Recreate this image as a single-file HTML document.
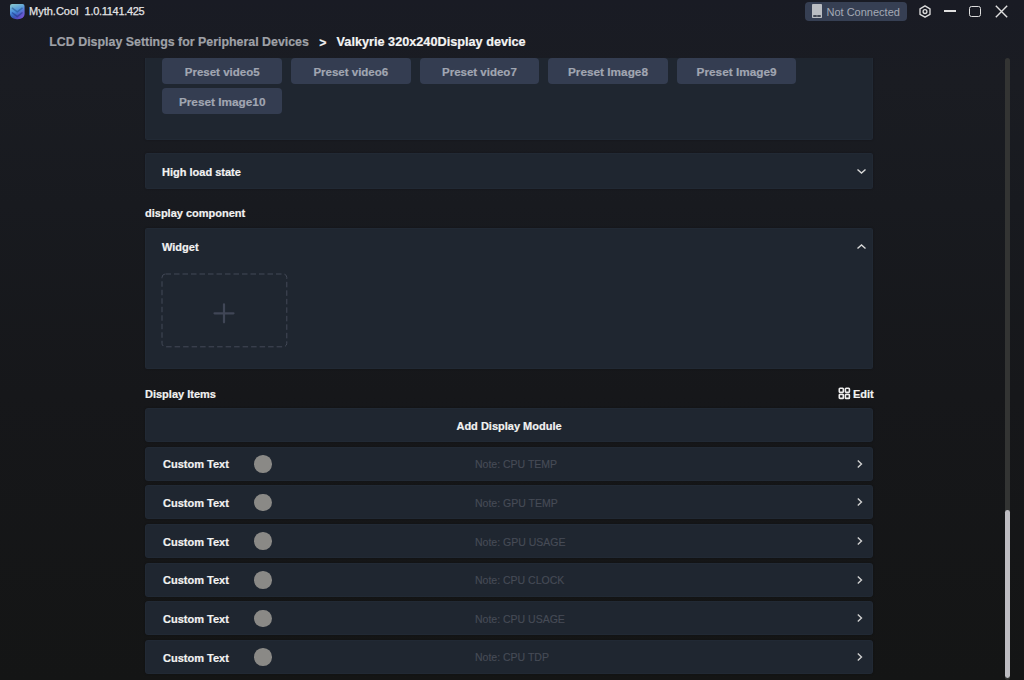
<!DOCTYPE html>
<html><head><meta charset="utf-8">
<style>
*{margin:0;padding:0;box-sizing:border-box}
html,body{width:1024px;height:680px;overflow:hidden}
body{position:relative;font-family:"Liberation Sans",sans-serif;background:linear-gradient(180deg,#191b24 0%,#1a1c22 12%,#181a1f 30%,#16171a 58%,#141515 100%);color:#fff}
.a{position:absolute;white-space:nowrap}
.t{position:absolute;white-space:nowrap;line-height:1}
.b{-webkit-text-stroke:0.25px currentColor}
.panel{position:absolute;left:145px;width:728px;background:#1f2630;border-radius:2px}
.btn{position:absolute;height:25.6px;width:119.6px;background:#343d51;border-radius:4px;color:#a1a6b2;font-weight:bold;-webkit-text-stroke:0.2px currentColor;font-size:11.5px;text-align:center;line-height:28.6px}
.row{position:absolute;left:145px;width:728px;height:34.3px;background:#1f2630;border-radius:3px}
.r{height:34px}
.panel,.row{box-shadow:inset 0 0 0 1px rgba(60,66,90,0.1),0 0 2px rgba(0,0,0,0.3)}
.row .ct{position:absolute;left:18px;top:0.6px;line-height:34.5px;font-size:11px;font-weight:bold;-webkit-text-stroke:0.2px currentColor;color:#f2f2f2}
.row .dot{position:absolute;left:109px;top:8.4px;width:17.5px;height:17.5px;border-radius:50%;background:#8a8986}
.row .note{position:absolute;left:330px;top:0.5px;-webkit-text-stroke:0.15px currentColor;line-height:34.5px;font-size:10.5px;color:#464b56}
.row svg{position:absolute;left:711px;top:12px}
</style></head>
<body>
<!-- title bar -->
<svg class="a" style="left:8.5px;top:2.5px" width="16.5" height="17" viewBox="0 0 16.5 17">
  <defs>
   <linearGradient id="lg" x1="0.2" y1="0" x2="0.5" y2="1"><stop offset="0" stop-color="#86c6cf"/><stop offset="0.5" stop-color="#4a8ddc"/><stop offset="1" stop-color="#1f3596"/></linearGradient>
   <linearGradient id="lg2" x1="0" y1="0" x2="1" y2="1"><stop offset="0.5" stop-color="#8a5ae8" stop-opacity="0"/><stop offset="0.9" stop-color="#9060e6" stop-opacity="0.95"/></linearGradient>
   <clipPath id="cp"><path d="M3 1 H13.5 Q15.5 1 15.5 3 V10.5 Q15.5 14 12 15.6 Q8.25 17 4.5 15.6 Q1 14 1 10.5 V3 Q1 1 3 1 Z"/></clipPath>
  </defs>
  <path d="M3 1 H13.5 Q15.5 1 15.5 3 V10.5 Q15.5 14 12 15.6 Q8.25 17 4.5 15.6 Q1 14 1 10.5 V3 Q1 1 3 1 Z" fill="url(#lg)"/>
  <g clip-path="url(#cp)"><rect x="0" y="0" width="17" height="17" fill="url(#lg2)"/></g>
  <path d="M3 4.8 L8.25 8.8 L13.5 4.8" stroke="#23508a" stroke-width="1.5" fill="none" opacity="0.55"/>
  <path d="M3 9.5 L8.25 13.5 L13.5 9.5" stroke="#1a2a80" stroke-width="1.5" fill="none" opacity="0.5"/>
</svg>
<div class="t" style="left:29px;top:6.3px;font-size:11px;color:#e4e4e6;-webkit-text-stroke:0.25px currentColor">Myth.Cool</div>
<div class="t" style="left:84.6px;top:6.3px;font-size:11px;letter-spacing:-0.3px;color:#e4e4e6;-webkit-text-stroke:0.25px currentColor">1.0.1141.425</div>

<div class="a" style="left:805px;top:2px;width:102px;height:18.5px;background:#363f53;border-radius:4px"></div>
<div class="a" style="left:811.7px;top:3.8px;width:10.3px;height:14.1px;background:#babdc2;border-radius:0.8px"></div>
<div class="a" style="left:813px;top:14.8px;width:3.6px;height:2.1px;background:#434955;border-radius:1px"></div>
<div class="a" style="left:817.2px;top:14.8px;width:3.6px;height:2.1px;background:#434955;border-radius:1px"></div>
<div class="t" style="left:826.5px;top:6.5px;font-size:11px;color:#a4a9b5">Not Connected</div>

<svg class="a" style="left:918px;top:4px" width="14" height="15" viewBox="918 4 14 15">
  <path d="M925 5.9 L930 8.8 L930 14.4 L925 17.2 L920 14.4 L920 8.8 Z" stroke="#dcdcdc" stroke-width="1.35" fill="none" stroke-linejoin="round"/>
  <circle cx="925" cy="11.55" r="1.9" stroke="#dcdcdc" stroke-width="1.35" fill="none"/>
</svg>
<div class="a" style="left:943.5px;top:10.3px;width:12.2px;height:1.7px;background:#e0e0e0"></div>
<div class="a" style="left:969px;top:5.6px;width:12.2px;height:11.8px;border:1.5px solid #dedede;border-radius:2.5px"></div>
<svg class="a" style="left:995px;top:5px" width="13" height="13" viewBox="0 0 13 13">
  <path d="M0.8 0.8 L12.2 12.2 M12.2 0.8 L0.8 12.2" stroke="#e0e0e0" stroke-width="1.4"/>
</svg>

<!-- breadcrumb -->
<div class="t" style="left:49.3px;top:36px;font-size:12.4px;font-weight:bold;-webkit-text-stroke:0.2px currentColor;color:#9fa1a7">LCD Display Settings for Peripheral Devices</div>
<div class="t" style="left:319.3px;top:37px;font-size:12.3px;font-weight:bold;-webkit-text-stroke:0.2px currentColor;color:#f0f0f0">&gt;</div>
<div class="t" style="left:336.6px;top:35.8px;font-size:12.7px;font-weight:bold;-webkit-text-stroke:0.2px currentColor;color:#f4f4f4">Valkyrie 320x240Display device</div>

<!-- scroll content -->
<div class="a" style="left:0;top:58px;width:1024px;height:622px;overflow:hidden">
 <div class="a" style="left:0;top:-58px;width:1024px;height:680px">
  <div class="panel" style="top:40px;height:100px"></div>
  <div class="btn" style="left:162.4px;top:58.2px">Preset video5</div>
  <div class="btn" style="left:291px;top:58.2px">Preset video6</div>
  <div class="btn" style="left:419.6px;top:58.2px">Preset video7</div>
  <div class="btn" style="left:548.2px;top:58.2px;font-size:11.8px">Preset Image8</div>
  <div class="btn" style="left:676.8px;top:58.2px;font-size:11.8px">Preset Image9</div>
  <div class="btn" style="left:162.4px;top:88.2px;font-size:11.8px">Preset Image10</div>

  <div class="panel" style="top:153.2px;height:35.6px"></div>
  <div class="t" style="left:162px;top:166.8px;font-size:11px;font-weight:bold;-webkit-text-stroke:0.2px currentColor;color:#f2f2f2">High load state</div>
  <svg class="a" style="left:856px;top:168px" width="11" height="7" viewBox="0 0 11 7"><path d="M1.5 1.5 L5.5 5 L9.5 1.5" stroke="#d8d8d8" stroke-width="1.4" fill="none"/></svg>

  <div class="t" style="left:145px;top:208px;font-size:11px;font-weight:bold;-webkit-text-stroke:0.2px currentColor;color:#f2f2f2">display component</div>

  <div class="panel" style="top:227.8px;height:141.1px"></div>
  <div class="t" style="left:162px;top:241.8px;font-size:11px;font-weight:bold;-webkit-text-stroke:0.2px currentColor;color:#f2f2f2">Widget</div>
  <svg class="a" style="left:856px;top:243px" width="11" height="7" viewBox="0 0 11 7"><path d="M1.5 5.5 L5.5 2 L9.5 5.5" stroke="#d8d8d8" stroke-width="1.4" fill="none"/></svg>
  <svg class="a" style="left:161px;top:272.5px" width="127" height="75" viewBox="0 0 127 75">
    <rect x="1" y="1" width="124.8" height="72.8" rx="3.5" stroke="#434957" stroke-width="1" fill="none" stroke-dasharray="5.5 3"/>
    <path d="M53.5 40.3 H72.5 M63 31.3 V49.3" stroke="#404656" stroke-width="2.2" stroke-linecap="round"/>
  </svg>

  <div class="t" style="left:145px;top:388.6px;font-size:11px;font-weight:bold;-webkit-text-stroke:0.2px currentColor;color:#f2f2f2">Display Items</div>
  <svg class="a" style="left:838px;top:387px" width="13" height="13" viewBox="0 0 13 13">
    <g stroke="#eeeeee" stroke-width="1.6" fill="none"><rect x="1.3" y="1.3" width="4" height="4" rx="0.7"/><rect x="7.4" y="1.3" width="4" height="4" rx="0.7"/><rect x="1.3" y="7.4" width="4" height="4" rx="0.7"/><rect x="7.4" y="7.4" width="4" height="4" rx="0.7"/></g>
  </svg>
  <div class="t" style="left:853px;top:388.6px;font-size:11px;font-weight:bold;-webkit-text-stroke:0.2px currentColor;color:#f2f2f2">Edit</div>

  <div class="row" style="top:408.1px"><div class="t" style="left:0;width:728px;text-align:center;line-height:36px;font-size:11px;font-weight:bold;-webkit-text-stroke:0.2px currentColor;color:#f2f2f2">Add Display Module</div></div>

  <div class="row r" style="top:446.70px"><span class="ct">Custom Text</span><span class="dot"></span><span class="note">Note: CPU TEMP</span><svg width="8" height="10" viewBox="0 0 8 10"><path d="M1.8 1.5 L5.5 5 L1.8 8.5" stroke="#d0d0d0" stroke-width="1.4" fill="none"/></svg></div>
  <div class="row r" style="top:485.35px"><span class="ct">Custom Text</span><span class="dot"></span><span class="note">Note: GPU TEMP</span><svg width="8" height="10" viewBox="0 0 8 10"><path d="M1.8 1.5 L5.5 5 L1.8 8.5" stroke="#d0d0d0" stroke-width="1.4" fill="none"/></svg></div>
  <div class="row r" style="top:524.00px"><span class="ct">Custom Text</span><span class="dot"></span><span class="note">Note: GPU USAGE</span><svg width="8" height="10" viewBox="0 0 8 10"><path d="M1.8 1.5 L5.5 5 L1.8 8.5" stroke="#d0d0d0" stroke-width="1.4" fill="none"/></svg></div>
  <div class="row r" style="top:562.65px"><span class="ct">Custom Text</span><span class="dot"></span><span class="note">Note: CPU CLOCK</span><svg width="8" height="10" viewBox="0 0 8 10"><path d="M1.8 1.5 L5.5 5 L1.8 8.5" stroke="#d0d0d0" stroke-width="1.4" fill="none"/></svg></div>
  <div class="row r" style="top:601.30px"><span class="ct">Custom Text</span><span class="dot"></span><span class="note">Note: CPU USAGE</span><svg width="8" height="10" viewBox="0 0 8 10"><path d="M1.8 1.5 L5.5 5 L1.8 8.5" stroke="#d0d0d0" stroke-width="1.4" fill="none"/></svg></div>
  <div class="row r" style="top:639.95px"><span class="ct">Custom Text</span><span class="dot"></span><span class="note">Note: CPU TDP</span><svg width="8" height="10" viewBox="0 0 8 10"><path d="M1.8 1.5 L5.5 5 L1.8 8.5" stroke="#d0d0d0" stroke-width="1.4" fill="none"/></svg></div>
 </div>
</div>

<!-- scrollbar -->
<div class="a" style="left:1004.9px;top:57.5px;width:5.2px;height:622.5px;background:#333433;border-radius:2.5px"></div>
<div class="a" style="left:1004.9px;top:509.5px;width:4.9px;height:168.7px;background:#bdbcc1;border-radius:2.45px"></div>
</body></html>
